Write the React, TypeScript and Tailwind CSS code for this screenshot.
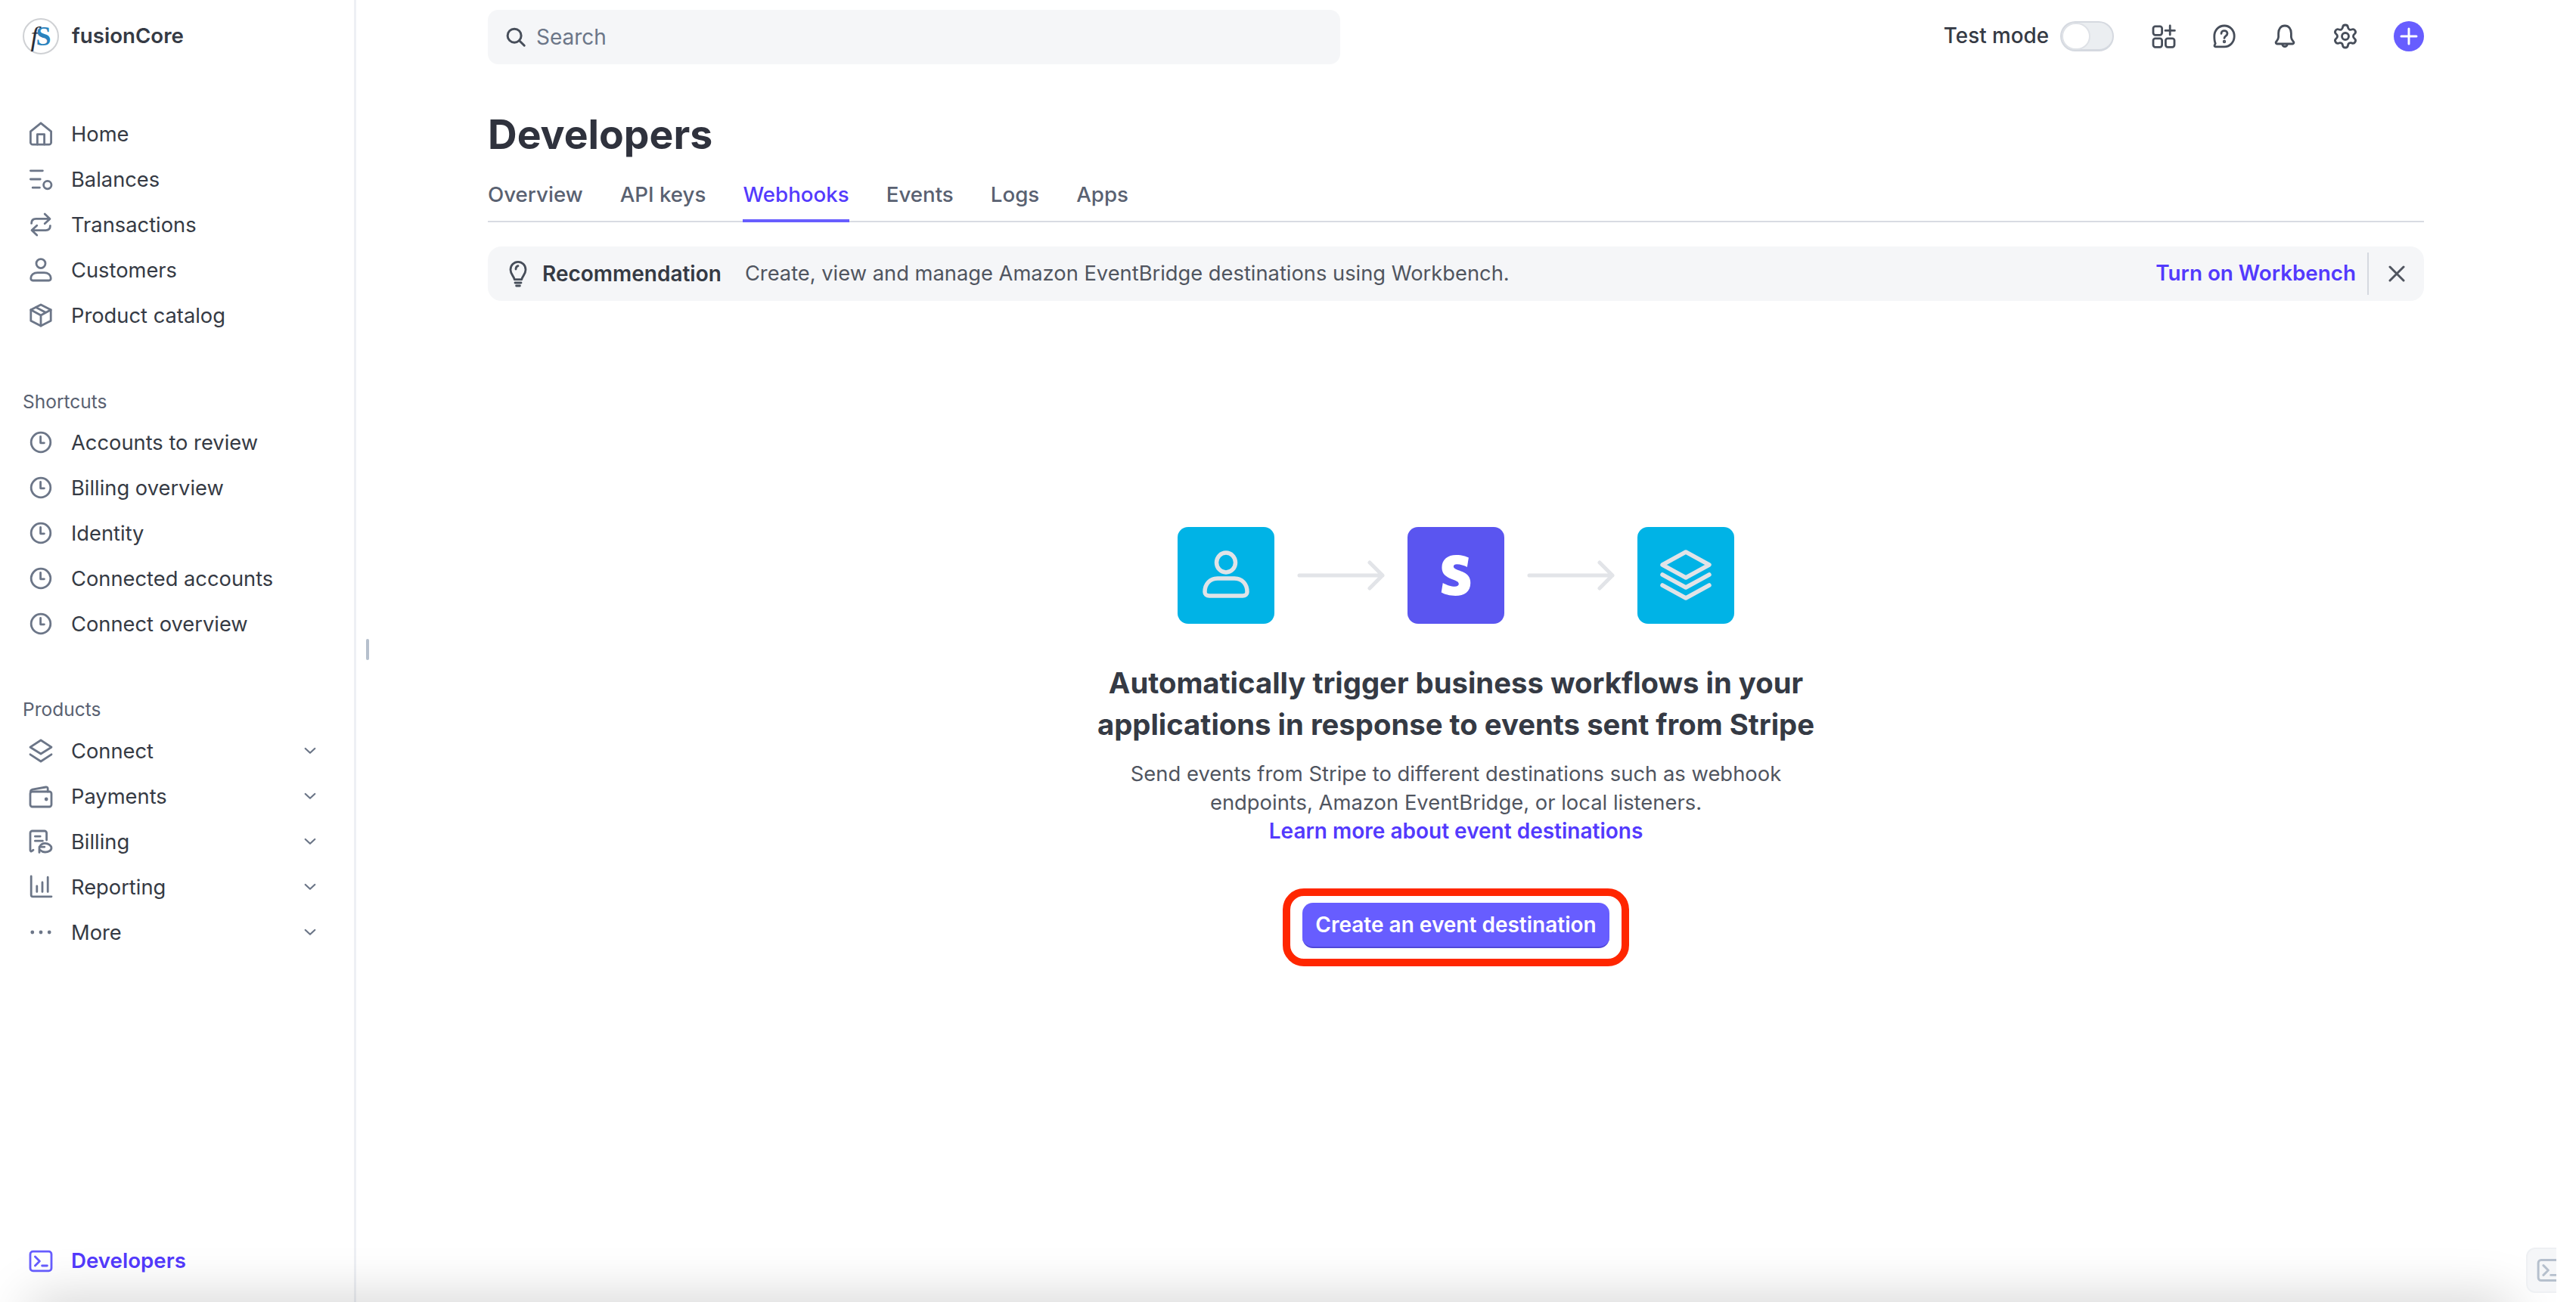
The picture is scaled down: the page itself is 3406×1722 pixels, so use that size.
import React from "react";
import { Settings } from "lucide-react";
import { SiStripe } from "react-icons/si";

const S = ({ size = 32, children, className = "", sw = 1.4 }: { size?: number; children: React.ReactNode; className?: string; sw?: number }) => (
  <svg width={size} height={size} viewBox="0 0 16 16" fill="none" stroke="currentColor" strokeWidth={sw} strokeLinecap="round" strokeLinejoin="round" className={className}>
    {children}
  </svg>
);

const Home = () => (
  <S>
    <path d="M1.2 6.4 8 .9l6.8 5.500v7.300a1.400 1.400 0 0 1-1.400 1.400H2.600a1.400 1.400 0 0 1-1.400-1.400z" />
    <path d="M5.700 15V8.300h4.600V15" />
  </S>
);
const Balances = () => (
  <S>
    <path d="M1.200 2.400h8M1.200 8h6.400M2.600 13.600h4.600" />
    <circle cx="12.400" cy="11.800" r="2.600" />
  </S>
);
const Transactions = () => (
  <S>
    <path d="M1.800 7.200c0-2 1.200-3 3-3h9M10.600 1l3.400 3.200-3.400 3.200" />
    <path d="M14.200 8.800c0 2-1.200 3-3 3h-9M5.400 15 2 11.800l3.400-3.200" />
  </S>
);
const Customers = () => (
  <S>
    <circle cx="8" cy="3.800" r="3" />
    <path d="M2.600 15h10.800a1.200 1.200 0 0 0 1.200-1.200c0-2.600-2-4-4.400-4H5.800c-2.400 0-4.400 1.400-4.400 4A1.200 1.200 0 0 0 2.600 15z" />
  </S>
);
const Product = () => (
  <S>
    <path d="M8 1l6.600 3.400v7.200L8 15l-6.600-3.400V4.400z" />
    <path d="M1.400 4.400 8 8l6.600-3.600M8 8v7M4.800 2.700l6.600 3.500" />
  </S>
);
const Clock = () => (
  <S>
    <circle cx="8" cy="8" r="6.400" />
    <path d="M7.800 4.200v4.200h2.400" />
  </S>
);
const Connect = () => (
  <S>
    <path d="M8 1 15 5.600 8 10 1 5.600z" />
    <path d="M1 10.400 8 15l7-4.600" />
  </S>
);
const Wallet = () => (
  <S>
    <rect x="1" y="5" width="14" height="10" rx="1.400" />
    <path d="M1.200 5.200c0-.9.5-1.400 1.300-1.600l8.800-1.600c.8-.1 1.300.3 1.300 1.100V5" />
    <circle cx="11.600" cy="10" r=".5" fill="currentColor" />
  </S>
);
const Billing = () => (
  <S>
    <path d="M11.800 7V2.400A1.400 1.400 0 0 0 10.400 1H2.400A1.400 1.400 0 0 0 1 2.400V13.800c0 .6.7.9 1.100.5L3 13.600" />
    <path d="M4.200 4.600h3.400M4.200 7.600h5" />
    <path d="M7.200 11.400c.7-1.400 2-2.200 3.600-2.200 2.300 0 4.200 1.600 4.200 3 0 1.700-2 2.800-4.200 2.800-1.300 0-2.400-.5-3.100-1.200" />
    <path d="M7 15.200v-3.600h3.400" />
  </S>
);
const Reporting = () => (
  <S>
    <path d="M1.600 1v12.400c0 .6.4 1 1 1H15" />
    <path d="M5.400 7.400v3.800M9 5v6.200M12.600 1.600v9.600" />
  </S>
);
const More = () => (
  <svg width="32" height="32" viewBox="0 0 16 16" fill="currentColor">
    <circle cx="2.400" cy="8" r="1.200" />
    <circle cx="8" cy="8" r="1.200" />
    <circle cx="13.600" cy="8" r="1.200" />
  </svg>
);
const Terminal = ({ size = 32 }: { size?: number }) => (
  <S size={size}>
    <rect x="1" y="1.600" width="14" height="12.800" rx="1.800" />
    <path d="M4.200 5l3 3-3 3M8.800 11h3.400" />
  </S>
);
const Chevron = () => (
  <S size={20} sw={1.8}>
    <path d="M3 5.600l5 4.600 5-4.600" />
  </S>
);

const Row = ({ icon, label, chevron }: { icon: React.ReactNode; label: string; chevron?: boolean }) => (
  <div className="flex h-[60px] items-center pl-[8px] text-[#353a44]">
    <span className="flex w-[32px] justify-center text-[#6c7688]">{icon}</span>
    <span className="ml-[24px] pt-[1px] text-[27.3px] leading-[40px]">{label}</span>
    {chevron && (
      <span className="ml-auto mr-[18px] text-[#6c7688]">
        <Chevron />
      </span>
    )}
  </div>
);

const Section = ({ title, className }: { title: string; className: string }) => (
  <div className={`h-[40px] text-[24.5px] leading-[40px] text-[#596171] ${className}`}>{title}</div>
);

const topIcons = "text-[#474e5a]";

const Apps = () => (
  <S className={topIcons}>
    <rect x="1" y="1.400" width="5.800" height="5.800" rx="1.400" />
    <rect x="1" y="9.400" width="5.800" height="5.800" rx="1.400" />
    <rect x="9.200" y="9.400" width="5.800" height="5.800" rx="1.400" />
    <path d="M12.100 1v6M9 4.200h6.200" />
  </S>
);
const Help = () => (
  <S className={topIcons}>
    <path d="M8 1c3.800 0 6.600 3 6.600 6.900 0 3.900-2.800 7-6.600 7H2.300c-.8 0-1-.5-.7-1.100l.5-1.100C1.500 11.500 1.400 9.400 1.400 7.900 1.400 4 4.200 1 8 1z" />
    <path d="M6 6.200c0-1.200.9-1.900 2-1.900s2 .7 2 1.800c0 1.700-2 1.600-2 3.100" />
    <circle cx="8" cy="11.500" r=".4" fill="currentColor" />
  </S>
);
const Bell = () => (
  <S className={topIcons}>
    <path d="M8 1C5.300 1 3.800 3.200 3.800 6v2.500c0 1.300-.9 2.200-1.600 3.200-.4.600 0 1.300.7 1.300h10.200c.7 0 1.100-.7.7-1.300-.7-1-1.600-1.900-1.600-3.200V6C12.200 3.200 10.700 1 8 1z" />
    <path d="M6.400 13.200a1.600 1.600 0 0 0 3.200 0" />
  </S>
);

const HeroBox = ({ children, color }: { children: React.ReactNode; color: string }) => (
  <div className={`flex h-[128px] w-[128px] items-center justify-center rounded-[14px] ${color}`}>{children}</div>
);

const Arrow = () => (
  <svg width="116" height="40" viewBox="0 0 116 40" fill="none" stroke="#e2e4e8" strokeWidth="5" strokeLinecap="round" strokeLinejoin="round" className="mx-[30px]">
    <path d="M3 20h110M96 3l17 17-17 17" />
  </svg>
);

const tabs = ["Overview", "API keys", "Webhooks", "Events", "Logs", "Apps"];

export default function App() {
  return (
    <div className="relative flex h-[1722px] w-[3380px] overflow-hidden bg-white text-[#353a44] [font-family:Inter,sans-serif]">
      <aside className="flex h-full w-[471px] shrink-0 flex-col border-r-[3px] border-[#eef0f4] px-[30px] pb-[24px]">
        <div className="mt-[24px] flex h-[48px] items-center">
          <div className="flex h-[48px] w-[48px] items-center justify-center rounded-full border-2 border-[#cfd1d4] [font-family:'Liberation_Serif',serif] text-[36px] italic leading-none">
            <span className="text-[#2b2f38]">f</span>
            <span className="-ml-[3px] font-bold not-italic text-[#2a82bd]">S</span>
          </div>
          <span className="ml-[17px] text-[27.7px] font-semibold">fusionCore</span>
        </div>
        <nav className="mt-[75px]">
          <Row icon={<Home />} label="Home" />
          <Row icon={<Balances />} label="Balances" />
          <Row icon={<Transactions />} label="Transactions" />
          <Row icon={<Customers />} label="Customers" />
          <Row icon={<Product />} label="Product catalog" />
        </nav>
        <Section title="Shortcuts" className="mt-[64px] mb-[4px]" />
        {["Accounts to review", "Billing overview", "Identity", "Connected accounts", "Connect overview"].map((l) => (
          <Row key={l} icon={<Clock />} label={l} />
        ))}
        <Section title="Products" className="mt-[63px] mb-[5px]" />
        <Row icon={<Connect />} label="Connect" chevron />
        <Row icon={<Wallet />} label="Payments" chevron />
        <Row icon={<Billing />} label="Billing" chevron />
        <Row icon={<Reporting />} label="Reporting" chevron />
        <Row icon={<More />} label="More" chevron />
        <div className="mt-auto flex h-[60px] items-center pl-[8px]">
          <span className="flex w-[32px] justify-center text-[#675dff]">
            <Terminal />
          </span>
          <span className="ml-[24px] text-[27.7px] font-semibold text-[#533afd]">Developers</span>
        </div>
      </aside>

      <div className="mt-[845px] ml-[13px] h-[28px] w-[4px] shrink-0 rounded-full bg-[#b6c0cd]" />

      <main className="ml-[157px] flex w-[2560px] shrink-0 flex-col">
        <header className="flex h-[98px] items-start pt-[13px]">
          <div className="flex h-[72px] w-[1127px] items-center rounded-[14px] bg-[#f5f6f8] pl-[22px]">
            <svg width="30" height="30" viewBox="0 0 16 16" fill="none" stroke="#474e5a" strokeWidth="1.6" strokeLinecap="round">
              <circle cx="7" cy="7" r="4.800" />
              <path d="M10.500 10.500 14 14" />
            </svg>
            <span className="ml-[12px] text-[28px] text-[#6c7688]">Search</span>
          </div>
          <div className="ml-auto mt-[15px] flex h-[40px] items-center">
            <span className="text-[27.8px] font-medium text-[#353a44]">Test mode</span>
            <div className="ml-[15px] flex h-[40px] w-[71px] items-center rounded-full border-2 border-b-[3px] border-[#d5d9e0] bg-[#ebeef1]">
              <div className="h-[36px] w-[38px] rounded-full border-2 border-[#dfe2e7] bg-white" />
            </div>
            <div className="ml-[50px] flex items-center gap-[48px]">
              <Apps />
              <Help />
              <Bell />
              <span className="flex w-[32px] justify-center">
                <Settings size={36} strokeWidth={1.9} className={`shrink-0 ${topIcons}`} />
              </span>
            </div>
            <div className="ml-[48px] flex h-[40px] w-[40px] items-center justify-center rounded-full bg-[#675dff]">
              <svg width="24" height="24" viewBox="0 0 24 24" stroke="#fff" strokeWidth="3" strokeLinecap="round">
                <path d="M12 2v20M2 12h20" />
              </svg>
            </div>
          </div>
        </header>

        <h1 className="mt-[44px] h-[72px] text-[53.5px] font-bold leading-[72px] text-[#2f323d]">Developers</h1>

        <div className="mt-[23px] flex h-[57px] gap-[49px] border-b-[2px] border-[#d8dbe2]">
          {tabs.map((t) => (
            <div
              key={t}
              className={
                t === "Webhooks"
                  ? "h-[57px] border-b-[4px] border-[#675dff] text-[27.7px] font-medium leading-[40px] text-[#533afd]"
                  : "text-[27.7px] font-medium leading-[40px] text-[#596171]"
              }
            >
              {t}
            </div>
          ))}
        </div>

        <div className="mt-[32px] flex h-[72px] items-center rounded-[18px] bg-[#f5f6f8] pl-[24px]">
          <svg width="32" height="36" viewBox="0 0 16 18" fill="none" stroke="#474e5a" strokeWidth="1.4" strokeLinecap="round" strokeLinejoin="round">
            <path d="M5.600 12.800C5.400 10.800 3 9.500 3 6.400 3 3.400 5.300 1.200 8 1.200s5 2.200 5 5.200c0 3.100-2.400 4.400-2.600 6.400z" />
            <path d="M6 15h4M6.800 17h2.400M6.500 6c0-1.100.6-1.900 1.500-2.200" />
          </svg>
          <span className="ml-[16px] text-[28px] font-semibold">Recommendation</span>
          <span className="ml-[31px] text-[27.3px] text-[#50555f]">Create, view and manage Amazon EventBridge destinations using Workbench.</span>
          <span className="ml-auto text-[27.8px] font-semibold text-[#533afd]">Turn on Workbench</span>
          <div className="ml-[15px] h-[56px] w-[2px] bg-[#d5d9e0]" />
          <div className="flex w-[73px] justify-center text-[#50555f]">
            <svg width="22" height="22" viewBox="0 0 22 22" stroke="currentColor" strokeWidth="3" strokeLinecap="round">
              <path d="M2 2l18 18M20 2 2 20" />
            </svg>
          </div>
        </div>

        <section className="mt-[299px] flex flex-col items-center">
          <div className="flex items-center">
            <HeroBox color="bg-[#00b3e6]">
              <svg width="128" height="128" viewBox="0 0 128 128" fill="none" stroke="#e1e3e7" strokeWidth="5.500" strokeLinecap="round" strokeLinejoin="round">
                <ellipse cx="64" cy="47" rx="12.500" ry="13" />
                <path d="M42 91h44c3.500 0 6-2 6-5 0-11-7-18-17-18H53c-10 0-17 7-17 18 0 3 2.500 5 6 5z" />
              </svg>
            </HeroBox>
            <Arrow />
            <HeroBox color="bg-[#5a55f0]">
              <SiStripe size={54} color="#ffffff" />
            </HeroBox>
            <Arrow />
            <HeroBox color="bg-[#00b3e6]">
              <svg width="128" height="128" viewBox="0 0 128 128" fill="none" stroke="#e1e3e7" strokeWidth="5.500" strokeLinecap="round" strokeLinejoin="round">
                <path d="M64 33l31 17-31 17-31-17z" />
                <path d="M33 63l31 17 31-17M33 77l31 17 31-17" />
              </svg>
            </HeroBox>
          </div>
          <h2 className="mt-[51px] text-center text-[38.3px] font-bold leading-[55px] text-[#353a44]">
            Automatically trigger business workflows in your
            <br />
            applications in response to events sent from Stripe
          </h2>
          <p className="mt-[18px] text-center text-[27.4px] leading-[38px] text-[#50555f]">
            Send events from Stripe to different destinations such as webhook
            <br />
            endpoints, Amazon EventBridge, or local listeners.
            <br />
            <span className="text-[28px] font-semibold text-[#533afd]">Learn more about event destinations</span>
          </p>
          <div className="mt-[57px] rounded-[28px] border-[10px] border-[#ff2600] px-[16px] pt-[9px] pb-[14px]">
            <button className="flex h-[60px] w-[406px] items-center justify-center rounded-[14px] border-b-[2px] border-[#4f46d8] bg-[#675dff] text-[28px] font-semibold text-white">
              Create an event destination
            </button>
          </div>
        </section>
      </main>

      <div className="pointer-events-none absolute right-[60px] bottom-[-50px] left-[40px] h-[50px] shadow-[0_0_70px_rgba(0,0,0,0.22)]" />
      <div className="absolute right-[-40px] bottom-[12px] flex h-[60px] w-[80px] items-center rounded-[12px] border-2 border-[#eef0f3] bg-[#f5f6f8] pl-[12px] text-[#b6c0cd]">
        <Terminal size={34} />
      </div>
    </div>
  );
}
